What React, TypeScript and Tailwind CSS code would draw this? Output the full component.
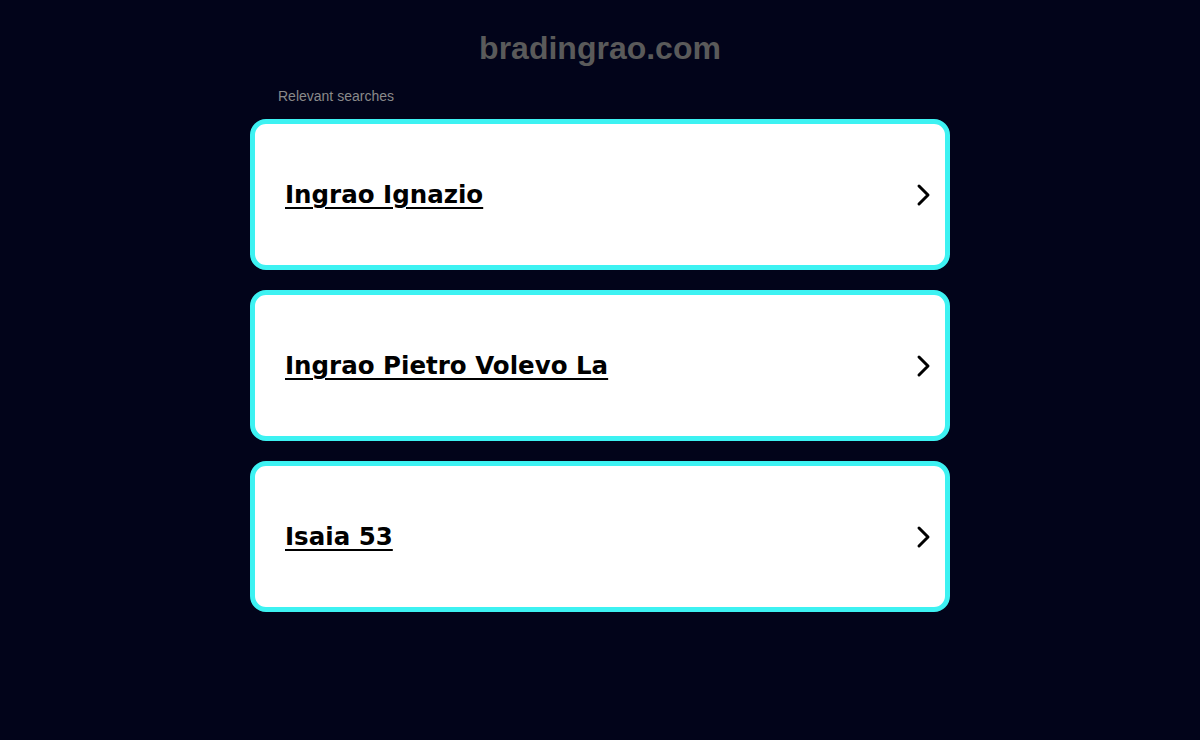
import React from "react";

const items = ["Ingrao Ignazio", "Ingrao Pietro Volevo La", "Isaia 53"];

function Chevron() {
  return (
    <svg width="16" height="24" viewBox="0 0 16 24" fill="none" className="shrink-0">
      <path d="M3 3 L12 12 L3 21" stroke="#000" strokeWidth="3" strokeLinecap="round" strokeLinejoin="round" />
    </svg>
  );
}

export default function App() {
  return (
    <div className="min-h-[740px] w-full bg-[#02041a] flex flex-col items-center">
      <h1 className="mt-[28px] text-[32px] leading-[40px] font-bold text-[#5a5a5a] font-['Liberation_Sans',Arial,sans-serif]">
        bradingrao.com
      </h1>
      <div className="w-[700px] mt-[20px]">
        <div className="pl-[28px] text-[14px] leading-[16px] text-[#8a8a8a] font-['Liberation_Sans',Arial,sans-serif]">
          Relevant searches
        </div>
        <div className="mt-[15px] flex flex-col gap-[20px]">
          {items.map((t) => (
            <a
              key={t}
              href="#"
              className="h-[151px] rounded-[16px] border-[5px] border-[#3df2f2] bg-white flex items-center justify-between pl-[30px] pr-[13px]"
            >
              <span className="mt-[2px] text-[24.5px] font-bold text-black underline underline-offset-[4px] decoration-[2px] font-['DejaVu_Sans',Verdana,sans-serif]">
                {t}
              </span>
              <Chevron />
            </a>
          ))}
        </div>
      </div>
    </div>
  );
}
